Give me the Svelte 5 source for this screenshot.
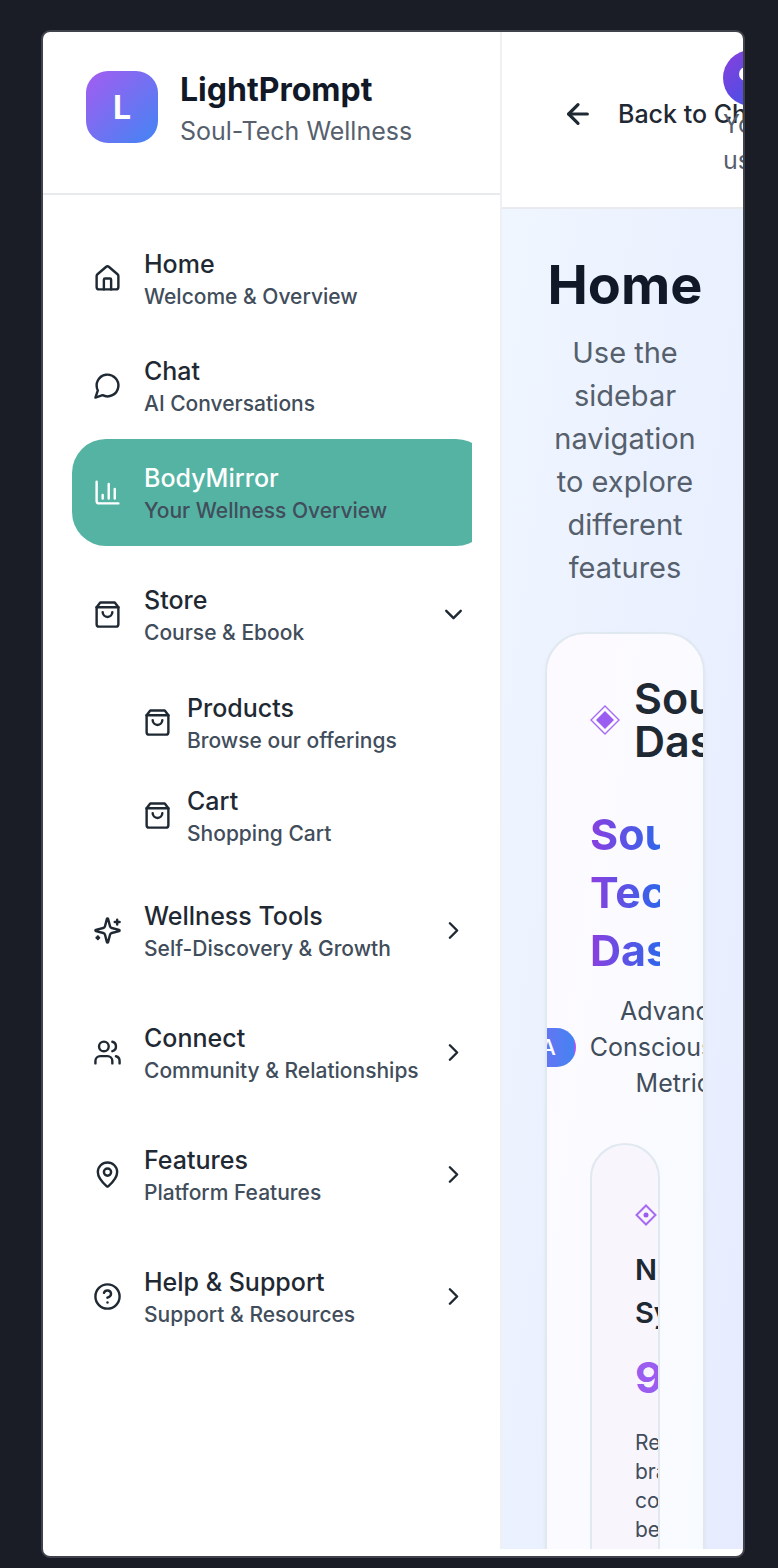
<script>
  const icons = {
    home: [
      'M15 21v-8a1 1 0 0 0-1-1h-4a1 1 0 0 0-1 1v8',
      'M3 10a2 2 0 0 1 .709-1.528l7-5.999a2 2 0 0 1 2.582 0l7 5.999A2 2 0 0 1 21 10v9a2 2 0 0 1-2 2H5a2 2 0 0 1-2-2z'
    ],
    chat: ['M7.9 20A9 9 0 1 0 4 16.1L2 22Z'],
    chart: ['M3 3v16a2 2 0 0 0 2 2h16', 'M18 17V9', 'M13 17V5', 'M8 17v-3'],
    bag: ['M6 2 3 6v14a2 2 0 0 0 2 2h14a2 2 0 0 0 2-2V6l-3-4Z', 'M3 6h18', 'M16 10a4 4 0 0 1-8 0'],
    sparkles: [
      'M9.937 15.5A2 2 0 0 0 8.5 14.063l-6.135-1.582a.5.5 0 0 1 0-.962L8.5 9.936A2 2 0 0 0 9.937 8.5l1.582-6.135a.5.5 0 0 1 .963 0L14.063 8.5A2 2 0 0 0 15.5 9.937l6.135 1.581a.5.5 0 0 1 0 .964L15.5 14.063a2 2 0 0 0-1.437 1.437l-1.582 6.135a.5.5 0 0 1-.963 0z',
      'M20 3v4',
      'M22 5h-4',
      'M4 17v2',
      'M5 18H3'
    ],
    users: [
      'M16 21v-2a4 4 0 0 0-4-4H6a4 4 0 0 0-4 4v2',
      'M13 7a4 4 0 1 1-8 0a4 4 0 1 1 8 0',
      'M22 21v-2a4 4 0 0 0-3-3.87',
      'M16 3.13a4 4 0 0 1 0 7.75'
    ],
    pin: [
      'M20 10c0 4.993-5.539 10.193-7.399 11.799a1 1 0 0 1-1.202 0C9.539 20.193 4 14.993 4 10a8 8 0 0 1 16 0',
      'M15 10a3 3 0 1 1-6 0a3 3 0 1 1 6 0'
    ],
    help: [
      'M22 12a10 10 0 1 1-20 0a10 10 0 1 1 20 0',
      'M9.09 9a3 3 0 0 1 5.83 1c0 2-3 3-3 3',
      'M12 17h.01'
    ],
    down: ['m6 9 6 6 6-6'],
    right: ['m9 18 6-6-6-6'],
    back: ['m12 19-7-7 7-7', 'M19 12H5']
  };

  const pages = [
    { title: 'Home', note: 'Welcome & Overview', icon: 'home' },
    { title: 'Chat', note: 'AI Conversations', icon: 'chat' },
    { title: 'BodyMirror', note: 'Your Wellness Overview', icon: 'chart', active: true }
  ];

  let groups = $state([
    {
      title: 'Store',
      note: 'Course & Ebook',
      icon: 'bag',
      open: true,
      items: [
        { title: 'Products', note: 'Browse our offerings', icon: 'bag' },
        { title: 'Cart', note: 'Shopping Cart', icon: 'bag' }
      ]
    },
    { title: 'Wellness Tools', note: 'Self-Discovery & Growth', icon: 'sparkles', open: false, items: [] },
    { title: 'Connect', note: 'Community & Relationships', icon: 'users', open: false, items: [] },
    { title: 'Features', note: 'Platform Features', icon: 'pin', open: false, items: [] },
    { title: 'Help & Support', note: 'Support & Resources', icon: 'help', open: false, items: [] }
  ]);
</script>

{#snippet icon(name)}
  <svg class="icon" viewBox="0 0 24 24" aria-hidden="true">
    {#each icons[name] as d}<path {d} />{/each}
  </svg>
{/snippet}

{#snippet label(item)}
  <span class="label">
    <span class="name">{item.title}</span>
    <span class="note">{item.note}</span>
  </span>
{/snippet}

<div class="page">
  <div class="frame">
    <aside>
      <div class="brand">
        <div class="logo">L</div>
        <div>
          <div class="brand-name">LightPrompt</div>
          <div class="tagline">Soul-Tech Wellness</div>
        </div>
      </div>
      <nav>
        {#each pages as page}
          <a class="row" class:active={page.active} href="#{page.icon}">
            {@render icon(page.icon)}
            {@render label(page)}
          </a>
        {/each}
        {#each groups as group}
          <div class="group">
            <button class="row" aria-expanded={group.open} onclick={() => (group.open = !group.open)}>
              {@render icon(group.icon)}
              {@render label(group)}
              {@render icon(group.open ? 'down' : 'right')}
            </button>
            {#if group.open && group.items.length}
              <div class="children">
                {#each group.items as item}
                  <a class="child" href="#{item.title}">
                    {@render icon(item.icon)}
                    {@render label(item)}
                  </a>
                {/each}
              </div>
            {/if}
          </div>
        {/each}
      </nav>
    </aside>

    <div class="main">
      <header>
        <button class="back">
          {@render icon('back')}
          <span>Back to Chat</span>
        </button>
        <div class="user">
          <div class="avatar">
            <svg viewBox="0 0 56 56" aria-hidden="true">
              <circle cx="23" cy="24" r="7" />
              <circle cx="34" cy="24" r="7" />
            </svg>
          </div>
          <div class="user-text">Your usage</div>
        </div>
      </header>

      <main>
        <h1>Home</h1>
        <p class="intro">Use the sidebar navigation to explore different features</p>

        <section class="card">
          <div class="card-head">
            <svg class="gem" viewBox="0 0 30 30" aria-hidden="true">
              <path class="line" d="M15 1 29 15 15 29 1 15Z" />
              <path class="fill" d="M15 6 24 15 15 24 6 15Z" />
            </svg>
            <h2>Soul Dashboard</h2>
          </div>
          <h3>Soul-Tech Dashboard</h3>
          <div class="summary">
            <span class="badge">BETA</span>
            <span class="metrics">Advanced Consciousness Metrics</span>
          </div>
          <article class="metric">
            <svg class="dot-gem" viewBox="0 0 22 22" aria-hidden="true">
              <path class="line" d="M11 1.5 20.5 11 11 20.5 1.5 11Z" />
              <circle class="fill" cx="11" cy="11" r="2.5" />
            </svg>
            <h4>Neural Sync</h4>
            <div class="value">94%</div>
            <p>Resonant brainwave coherence between hemispheres</p>
          </article>
        </section>
      </main>
    </div>
  </div>
</div>

<style>
  :global(body) {
    margin: 0;
    background: #1a1d25;
  }

  .page {
    box-sizing: border-box;
    height: 100vh;
    padding: 30px 33px 10px 41px;
    font-family: Inter, 'Liberation Sans', sans-serif;
    color: #1f2933;
  }

  .page :global(*) {
    box-sizing: border-box;
  }

  .frame {
    display: flex;
    height: 100%;
    padding-bottom: 7px;
    overflow: hidden;
    background: #fff;
    border: 2px solid #40434b;
    border-radius: 9px;
  }

  button {
    border: 0;
    background: none;
    font: inherit;
    color: inherit;
    text-align: left;
    cursor: pointer;
  }

  a {
    color: inherit;
    text-decoration: none;
  }

  h1, h2, h3, h4, p {
    margin: 0;
  }

  .icon {
    flex: none;
    width: 29px;
    height: 29px;
    fill: none;
    stroke: currentColor;
    stroke-width: 2;
    stroke-linecap: round;
    stroke-linejoin: round;
  }

  aside {
    flex: none;
    width: 459px;
    border-right: 2px solid #eff0f2;
  }

  .brand {
    display: flex;
    align-items: center;
    gap: 22px;
    padding: 34px 43px 45px;
    border-bottom: 2px solid #e8eaed;
  }

  .logo {
    display: grid;
    place-items: center;
    width: 72px;
    height: 72px;
    border-radius: 22px;
    background: linear-gradient(135deg, #a45cf0, #4285f4);
    color: #fff;
    font-size: 32px;
    font-weight: 700;
  }

  .brand-name {
    font-size: 32px;
    line-height: 48px;
    font-weight: 700;
    color: #111827;
  }

  .tagline {
    font-size: 25px;
    line-height: 34px;
    color: #56606d;
  }

  nav {
    margin: 30px 28px 0 29px;
    overflow: hidden;
  }

  .row {
    display: flex;
    align-items: center;
    gap: 22px;
    width: calc(100% + 18px);
    padding: 21px 22px 21px 21px;
    border-radius: 34px;
  }

  .active {
    background: #55b3a4;
    color: #fff;
  }

  .label {
    flex: 1;
    white-space: nowrap;
    font-weight: 500;
  }

  .label + :global(.icon) {
    margin-left: -8px;
  }

  .name {
    display: block;
    font-size: 25px;
    line-height: 36px;
  }

  .note {
    display: block;
    font-size: 21px;
    line-height: 29px;
    color: #414d5b;
  }

  .group {
    margin-top: 15px;
  }

  .children {
    padding: 8px 0 0 57px;
  }

  .child {
    display: flex;
    align-items: center;
    gap: 15px;
    padding: 14px;
  }

  .main {
    flex: 1;
    min-width: 0;
    display: flex;
    flex-direction: column;
    overflow: hidden;
  }

  header {
    display: flex;
    align-items: center;
    padding: 18px 0 29px 60px;
    border-bottom: 2px solid #e8eaee;
  }

  .back {
    flex: 1;
    min-width: 0;
    display: flex;
    align-items: center;
    gap: 24px;
    padding: 0;
    white-space: nowrap;
    font-size: 25px;
    line-height: 36px;
    font-weight: 500;
  }

  .back :global(.icon) {
    width: 32px;
    height: 32px;
    stroke-width: 2.4;
  }

  .user {
    width: 56px;
    margin-right: -36px;
    font-size: 25px;
    line-height: 36px;
    color: #56606d;
  }

  .avatar {
    height: 56px;
    border-radius: 50%;
    background: linear-gradient(135deg, #8a3fdc, #2f55ea);
  }

  .avatar svg {
    display: block;
    width: 56px;
    height: 56px;
    fill: #fff;
  }

  main {
    flex: 1;
    min-height: 0;
    padding: 44px 38px 0 43px;
    background: linear-gradient(98deg, #eff6ff, #e6ecfe);
  }

  h1 {
    text-align: center;
    font-size: 54px;
    line-height: 64px;
    font-weight: 700;
    color: #111827;
  }

  .intro {
    margin: 14px 0 43px;
    text-align: center;
    font-size: 29px;
    line-height: 43px;
    color: #56606d;
  }

  .card {
    padding: 43px;
    overflow: hidden;
    border: 2px solid #e0e8f0;
    border-radius: 40px;
    background: linear-gradient(98deg, #fdfaff, #f7fbff);
    box-shadow: 0 2px 4px #0f172a0a;
  }

  .card-head {
    display: flex;
    align-items: center;
    gap: 14px;
  }

  .gem {
    flex: none;
    width: 30px;
    height: 30px;
  }

  .dot-gem {
    display: block;
    width: 22px;
    height: 22px;
  }

  .line {
    fill: none;
    stroke: #a66bf2;
    stroke-width: 2;
  }

  .gem .line {
    stroke-width: 1.4;
  }

  .fill {
    fill: #9b5cf0;
  }

  h2 {
    font-size: 43px;
    line-height: 43px;
    font-weight: 600;
  }

  h3 {
    margin: 42px 0 14px;
    font-size: 43px;
    line-height: 58px;
    font-weight: 700;
    background: linear-gradient(90deg, #8b3fe0, #2f66ea);
    background-clip: text;
    color: transparent;
  }

  .summary {
    display: flex;
    justify-content: center;
    align-items: center;
    gap: 14px;
    margin-bottom: 42px;
  }

  .badge {
    flex: none;
    padding: 4px 18px;
    border: 2px solid transparent;
    border-radius: 20px;
    background: linear-gradient(90deg, #a855f7, #4583f2);
    color: #fff;
    font-size: 22px;
    line-height: 27px;
    font-weight: 500;
  }

  .metrics {
    text-align: center;
    font-size: 25px;
    line-height: 36px;
    color: #414d5b;
  }

  .metric {
    height: 600px;
    padding: 59px 0 0 43px;
    overflow: hidden;
    border: 2px solid #e0e8f0;
    border-radius: 40px;
    background: #f8f5fd;
  }

  h4 {
    margin-top: 22px;
    font-size: 29px;
    line-height: 43px;
    font-weight: 600;
  }

  .value {
    margin: 15px 0 22px;
    font-size: 43px;
    line-height: 57px;
    font-weight: 700;
    color: #9b5cf0;
  }

  .metric p {
    font-size: 21px;
    line-height: 29px;
    color: #414d5b;
  }
</style>
